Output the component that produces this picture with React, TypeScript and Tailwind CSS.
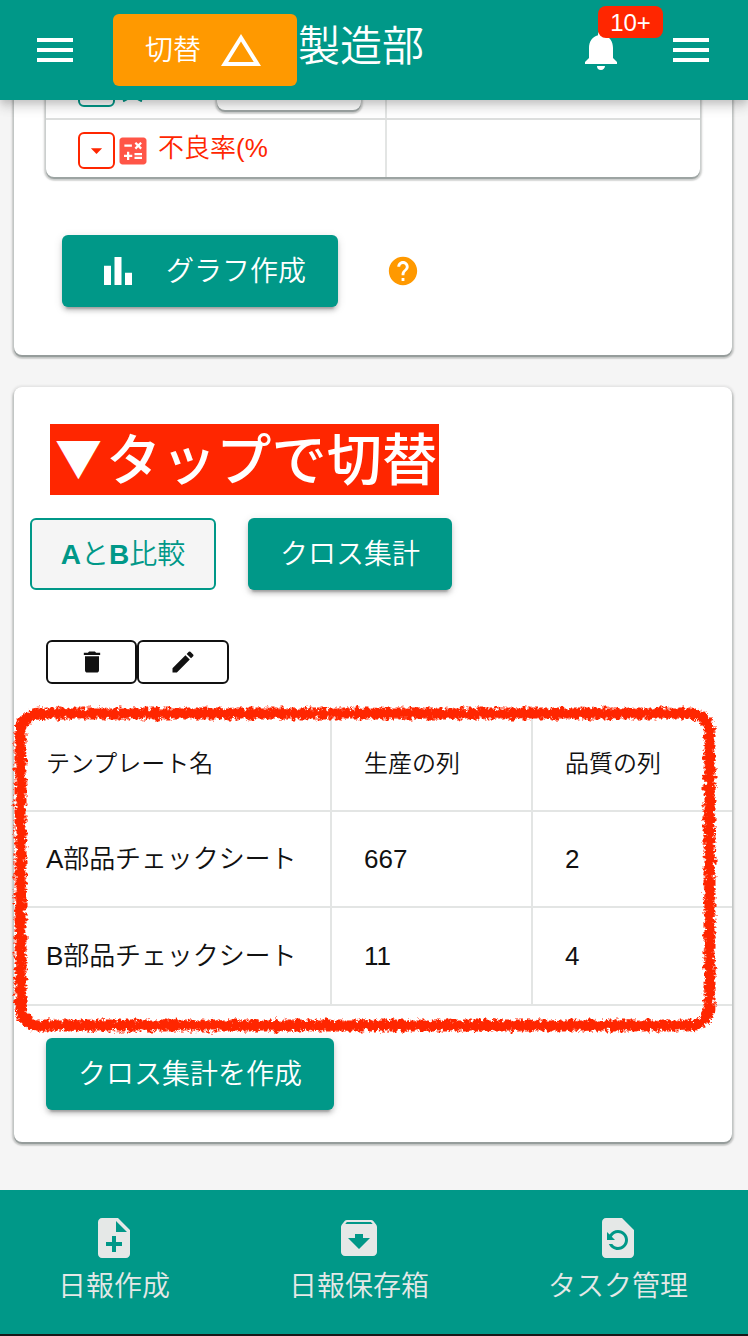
import { ReactNode } from "react";
import {
  MdArchive,
  MdArrowDropDown,
  MdBarChart,
  MdCalculate,
  MdChangeHistory,
  MdDelete,
  MdEdit,
  MdHelp,
  MdMenu,
  MdNoteAdd,
  MdNotifications,
  MdRestorePage,
} from "react-icons/md";

const rows = [
  { name: "A部品チェックシート", production: "667", quality: "2" },
  { name: "B部品チェックシート", production: "11", quality: "4" },
];

const navItems = [
  { label: "日報作成", icon: MdNoteAdd },
  { label: "日報保存箱", icon: MdArchive },
  { label: "タスク管理", icon: MdRestorePage },
];

const cardShadow =
  "shadow-[0_2px_0_0_rgba(0,20,15,0.2),0_2px_2px_1px_rgba(0,20,15,0.12),0_2px_1px_2px_rgba(0,20,15,0.08),0_1px_2px_3px_rgba(0,20,15,0.05)]";

function PrimaryButton({ children, className = "" }: { children: ReactNode; className?: string }) {
  return (
    <button
      className={`flex h-[72px] items-center rounded-[6px] bg-[#009888] text-[28px] leading-none text-white shadow-[0_6px_2px_-4px_rgba(0,0,0,0.2),0_4px_4px_0_rgba(0,0,0,0.14),0_2px_10px_0_rgba(0,0,0,0.12)] ${className}`}
    >
      {children}
    </button>
  );
}

function Header() {
  return (
    <header className="relative z-10 flex h-[100px] items-start bg-[#009888] text-white shadow-[0_4px_6px_-1px_rgba(0,0,0,0.1),0_8px_10px_0_rgba(0,0,0,0.1),0_2px_18px_0_rgba(0,0,0,0.08)]">
      <button aria-label="メニュー" className="mt-[26px] ml-[31px]">
        <MdMenu size={48} />
      </button>
      <button className="mt-[14px] ml-[34px] flex h-[72px] w-[184px] items-center rounded-[6px] bg-[#ff9900] pl-8 text-[28px] leading-none">
        <span className="pt-0.5">切替</span>
        <MdChangeHistory size={48} className="ml-[16px]" />
      </button>
      <h1 className="mt-[26px] ml-px text-[42px] leading-none">製造部</h1>
      <div className="relative mt-[26px] ml-[153px]">
        <MdNotifications size={48} />
        <span className="absolute -top-[20px] left-[21px] flex h-8 w-[65px] items-center justify-center rounded-[8px] bg-[#ff2600] pt-0.5 text-[24px] leading-none">
          10+
        </span>
      </div>
      <button aria-label="設定" className="mt-[26px] ml-[42px]">
        <MdMenu size={48} />
      </button>
    </header>
  );
}

function GraphCard() {
  return (
    <section className={`-mt-10 ml-[14px] h-[295px] w-[718px] rounded-[8px] bg-white ${cardShadow}`}>
      <div className={`ml-8 w-[654px] overflow-hidden rounded-b-[8px] bg-white ${cardShadow}`}>
        <div className="flex h-[60px] border-b-2 border-[#dcdedd]">
          <div className="flex w-[341px] border-r-2 border-[#e3e5e4] pl-8 text-[#009888]">
            <span className="mt-[10px] h-[37px] w-[37px] rounded-[6px] border-2 border-[#009888]" />
            <svg width="28" height="42" viewBox="0 0 28 42" className="ml-1" fill="none" stroke="currentColor" strokeWidth="2.5">
              <path d="M4 41q6-2 9-8M23 41q-6-2-9-8" />
            </svg>
            <span className={`ml-[70px] h-[50px] w-[144px] rounded-[8px] bg-white ${cardShadow}`} />
          </div>
        </div>
        <div className="flex h-[57px]">
          <div className="flex w-[341px] border-r-2 border-[#e3e5e4] pl-8 text-[#ff2600]">
            <button className="mt-3 flex h-[37px] w-[37px] items-center justify-center rounded-[6px] border-2">
              <MdArrowDropDown size={27} />
            </button>
            <MdCalculate size={36} className="mt-[13px] text-[#ff5547]" />
            <span className="mt-[15px] ml-[7px] text-[26px] leading-none">不良率(%</span>
          </div>
        </div>
      </div>
      <div className="mt-[58px] ml-12 flex items-center">
        <PrimaryButton className="w-[276px] pl-[35px]">
          <MdBarChart size={42} />
          <span className="ml-[27px] pt-0.5">グラフ作成</span>
        </PrimaryButton>
        <MdHelp size={34} className="ml-12 text-[#ff9900]" />
      </div>
    </section>
  );
}

// Rough crayon outline around the comparison table
function CrayonFrame() {
  return (
    <svg width="720" height="340" viewBox="0 0 720 340" className="pointer-events-none absolute -top-[16px] -left-[8px]" fill="none" stroke="#ff2600">
      <defs>
        <filter id="crayon" filterUnits="userSpaceOnUse" x="0" y="0" width="720" height="340">
          <feTurbulence type="fractalNoise" baseFrequency="0.22" numOctaves="3" seed="4" result="noise" />
          <feDisplacementMap in="SourceGraphic" in2="noise" scale="7.5" xChannelSelector="R" yChannelSelector="G" />
        </filter>
      </defs>
      <g filter="url(#crayon)">
        <rect x="14.5" y="13.5" width="689" height="312" rx="19" strokeWidth="8.5" />
        <rect x="14.5" y="13.5" width="689" height="312" rx="19" strokeWidth="12" strokeDasharray="4 2 2 1 6 2 3 1" />
      </g>
    </svg>
  );
}

function CompareTable() {
  return (
    <div className="relative mt-8">
      <div className="grid grid-cols-[318px_201px_199px] text-[#111]">
        {["テンプレート名", "生産の列", "品質の列"].map((label, i) => (
          <div
            key={label}
            className={`flex h-24 items-center border-b-2 border-[#e3e5e4] pt-0.5 pl-8 text-[24px] leading-none ${i < 2 ? "border-r-2" : ""}`}
          >
            {label}
          </div>
        ))}
      </div>
      {rows.map((row) => (
        <div
          key={row.name}
          className="grid h-24 grid-cols-[318px_201px_199px] border-b-2 border-[#e3e5e4] text-[26px] leading-none text-[#111] last-of-type:h-[98px]"
        >
          <span className="flex items-center border-r-2 border-[#e3e5e4] pl-8 tracking-[-0.1px]">{row.name}</span>
          <span className="flex items-center border-r-2 border-[#e3e5e4] pl-8">{row.production}</span>
          <span className="flex items-center pl-8">{row.quality}</span>
        </div>
      ))}
      <CrayonFrame />
    </div>
  );
}

function CrossCard() {
  return (
    <section className={`mt-8 ml-[14px] h-[755px] w-[718px] rounded-[8px] bg-white ${cardShadow}`}>
      <div className="pt-[37px] pl-9">
        <h2 className="flex h-[71px] w-[389px] bg-[#ff2600] font-['Noto_Sans_CJK_JP',sans-serif] text-[55.2px] leading-[64px] font-medium whitespace-nowrap text-white">
          <span className="w-14 pl-[5px] text-[47px]">▼</span>
          タップで切替
        </h2>
      </div>
      <div className="mt-[23px] ml-4 flex gap-8">
        <button className="h-[72px] w-[186px] rounded-[6px] border-2 border-[#009888] bg-[#f5f5f5] pt-0.5 text-[28px] leading-none whitespace-nowrap text-[#009888]">
          <span className="font-bold">A</span>と<span className="font-bold">B</span>比較
        </button>
        <PrimaryButton className="w-[204px] justify-center pt-0.5">クロス集計</PrimaryButton>
      </div>
      <div className="mt-[50px] ml-8 flex text-[#111]">
        <button aria-label="削除" className="flex h-11 w-[91px] items-center justify-center rounded-[6px] border-2 pb-px">
          <MdDelete size={28} />
        </button>
        <button aria-label="編集" className="flex h-11 w-[92px] items-center justify-center rounded-[6px] border-2 pb-px">
          <MdEdit size={28} />
        </button>
      </div>
      <CompareTable />
      <PrimaryButton className="mt-8 ml-8 w-[288px] justify-center pt-0.5">クロス集計を作成</PrimaryButton>
    </section>
  );
}

function BottomNav() {
  return (
    <nav className="mt-12 flex h-[146px] gap-[119px] border-b-2 border-[#181818] bg-[#009888] pt-6 pl-[58px] text-[#e5e8e7]">
      {navItems.map(({ label, icon: Icon }) => (
        <button key={label} className="flex flex-col items-center text-[28px] leading-none">
          <Icon size={48} />
          <span className="mt-[11px]">{label}</span>
        </button>
      ))}
    </nav>
  );
}

export default function App() {
  return (
    <div className="h-[1336px] w-[748px] overflow-hidden bg-[#f5f5f5] font-['Liberation_Sans','Noto_Sans_CJK_JP',sans-serif] font-[350]">
      <Header />
      <GraphCard />
      <CrossCard />
      <BottomNav />
    </div>
  );
}
